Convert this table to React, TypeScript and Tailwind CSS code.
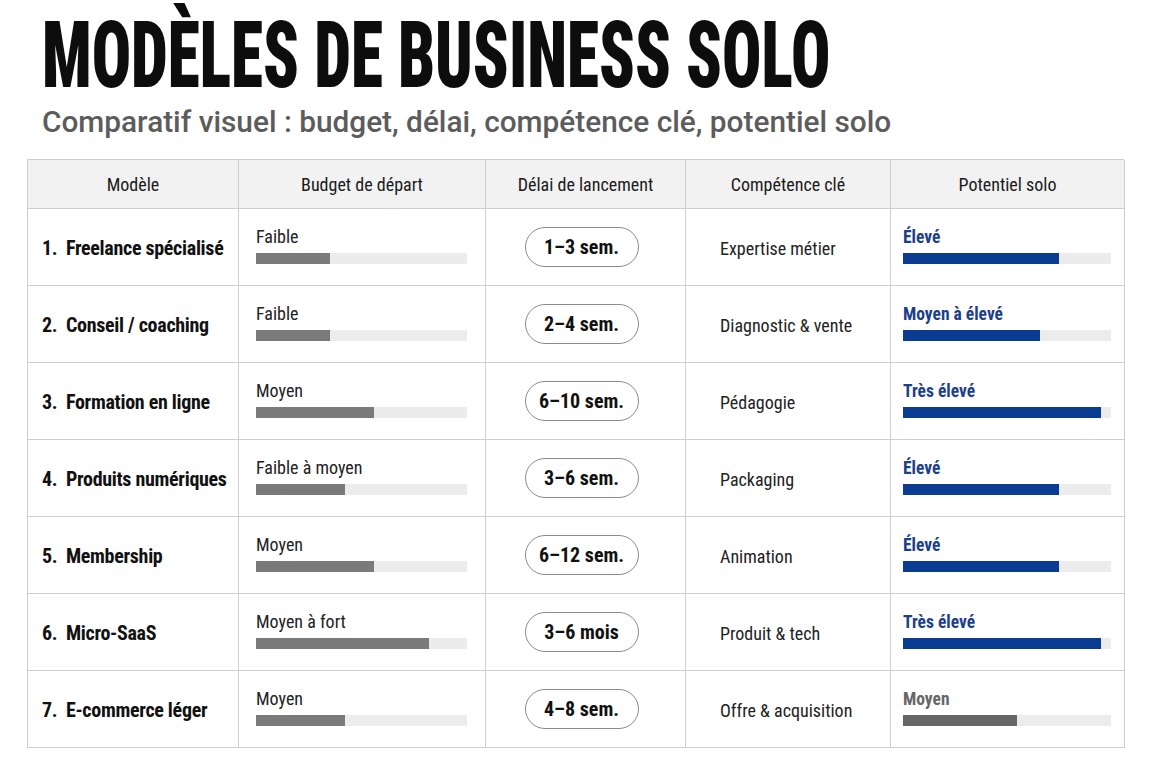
import React from 'react';

type Row = {
  model: string;
  budget: string;
  budgetPct: number;
  delay: string;
  skill: string;
  potential: string;
  potentialPct: number;
  blue: boolean;
};

const rows: Row[] = [
  { model: '1.  Freelance spécialisé', budget: 'Faible', budgetPct: 35, delay: '1–3 sem.', skill: 'Expertise métier', potential: 'Élevé', potentialPct: 75, blue: true },
  { model: '2.  Conseil / coaching', budget: 'Faible', budgetPct: 35, delay: '2–4 sem.', skill: 'Diagnostic & vente', potential: 'Moyen à élevé', potentialPct: 66, blue: true },
  { model: '3.  Formation en ligne', budget: 'Moyen', budgetPct: 56, delay: '6–10 sem.', skill: 'Pédagogie', potential: 'Très élevé', potentialPct: 95, blue: true },
  { model: '4.  Produits numériques', budget: 'Faible à moyen', budgetPct: 42, delay: '3–6 sem.', skill: 'Packaging', potential: 'Élevé', potentialPct: 75, blue: true },
  { model: '5.  Membership', budget: 'Moyen', budgetPct: 56, delay: '6–12 sem.', skill: 'Animation', potential: 'Élevé', potentialPct: 75, blue: true },
  { model: '6.  Micro-SaaS', budget: 'Moyen à fort', budgetPct: 82, delay: '3–6 mois', skill: 'Produit & tech', potential: 'Très élevé', potentialPct: 95, blue: true },
  { model: '7.  E-commerce léger', budget: 'Moyen', budgetPct: 42, delay: '4–8 sem.', skill: 'Offre & acquisition', potential: 'Moyen', potentialPct: 55, blue: false },
];

const headers = ['Modèle', 'Budget de départ', 'Délai de lancement', 'Compétence clé', 'Potentiel solo'];

// Roboto Condensed est installé, il donne l'aspect "condensed" du tableau
const condensed = "font-['Roboto_Condensed','Roboto',sans-serif]";

export default function App() {
  return (
    <div className="w-[1152px] h-[768px] bg-white overflow-hidden">
      {/* Titre */}
      <div className="pl-[42px] pt-[16px] h-[100px]">
        <h1 className={`${condensed} font-black text-[92px] leading-[80px] text-[#0d0d0d] whitespace-nowrap origin-left scale-x-[0.711]`}>
          MODÈLES DE BUSINESS SOLO
        </h1>
      </div>
      <p className="pl-[42px] font-['Roboto',sans-serif] font-medium text-[29.8px] leading-[44px] text-[#5c5c5c]">
        Comparatif visuel : budget, délai, compétence clé, potentiel solo
      </p>

      {/* Tableau */}
      <div className={`ml-[27px] mt-[15px] w-[1097px] grid grid-cols-[211px_247px_200px_205px_234px] border-l border-t border-[#cfcfcf] ${condensed}`}>
        {headers.map((h) => (
          <div key={h} className="h-[49px] flex items-center justify-center bg-[#f2f2f2] border-r border-b border-[#cfcfcf] text-[18px] text-[#1a1a1a]">
            {h}
          </div>
        ))}
        {rows.map((r) => (
          <React.Fragment key={r.model}>
            <div className="h-[77px] flex items-center pl-[14px] pt-[2px] border-r border-b border-[#cfcfcf] font-bold text-[20px] tracking-[-0.3px] text-[#111] whitespace-pre">
              {r.model}
            </div>
            <div className="h-[77px] flex flex-col justify-center pl-[17px] pr-[18px] pb-[4px] border-r border-b border-[#cfcfcf]">
              <span className="text-[18px] leading-[22px] text-[#222]">{r.budget}</span>
              <div className="mt-[5px] h-[11px] w-[211px] bg-[#ececec]">
                <div className="h-full bg-[#7a7a7a]" style={{ width: `${r.budgetPct}%` }} />
              </div>
            </div>
            <div className="h-[77px] flex items-center justify-center pr-[8px] border-r border-b border-[#cfcfcf]">
              <span className="w-[114px] h-[40px] flex items-center justify-center rounded-full border border-[#8a8a8a] font-bold text-[20px] text-[#111]">
                {r.delay}
              </span>
            </div>
            <div className="h-[77px] flex items-center pl-[34px] pt-[2px] border-r border-b border-[#cfcfcf] text-[18px] text-[#222]">
              {r.skill}
            </div>
            <div className="h-[77px] flex flex-col justify-center pl-[12px] pr-[13px] pb-[4px] border-r border-b border-[#cfcfcf]">
              <span className={`text-[17.5px] leading-[22px] font-bold ${r.blue ? 'text-[#1c3f8c]' : 'text-[#666]'}`}>
                {r.potential}
              </span>
              <div className="mt-[5px] h-[11px] w-[208px] bg-[#ececec]">
                <div className={`h-full ${r.blue ? 'bg-[#0a3d92]' : 'bg-[#666]'}`} style={{ width: `${r.potentialPct}%` }} />
              </div>
            </div>
          </React.Fragment>
        ))}
      </div>
    </div>
  );
}
